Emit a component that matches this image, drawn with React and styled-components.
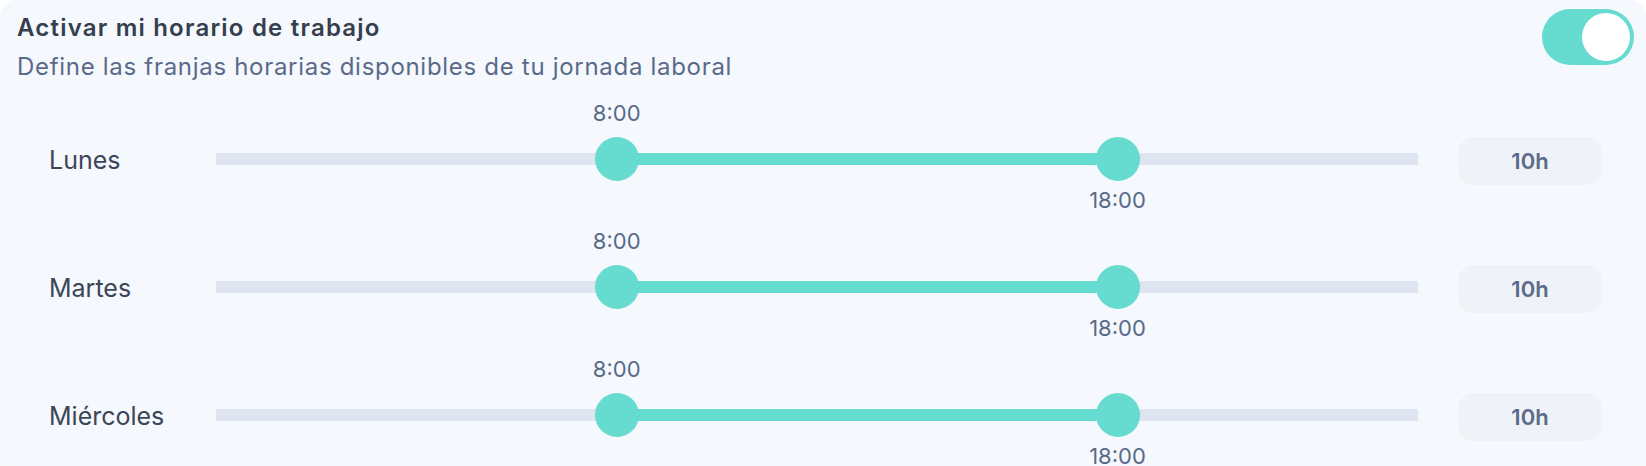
import { useState } from "react";
import styled, { createGlobalStyle } from "styled-components";

const GlobalStyle = createGlobalStyle`
    body {
        margin: 0;
        background: #ffffff;
        font-family: Inter, "Noto Sans", sans-serif;
    }
`;

const DAYS = [
    { name: "Lunes", start: 8, end: 18 },
    { name: "Martes", start: 8, end: 18 },
    { name: "Miércoles", start: 8, end: 18 },
];

const pct = (h) => `${(h / 24) * 100}%`;

function DayRow({ name, start, end }) {
    return (
        <Row>
            <DayName>{name}</DayName>
            <TrackArea>
                <Track />
                <Fill style={{ left: pct(start), width: pct(end - start) }} />
                <Thumb style={{ left: pct(start) }} />
                <Thumb style={{ left: pct(end) }} />
                <TimeLabel $pos="top" style={{ left: pct(start) }}>
                    {start}:00
                </TimeLabel>
                <TimeLabel $pos="bottom" style={{ left: pct(end) }}>
                    {end}:00
                </TimeLabel>
            </TrackArea>
            <Hours>{end - start}h</Hours>
        </Row>
    );
}

function App() {
    const [active, setActive] = useState(true);

    return (
        <>
            <GlobalStyle />
            <Card>
                <Header>
                    <div>
                        <Title>Activar mi horario de trabajo</Title>
                        <Subtitle>
                            Define las franjas horarias disponibles de tu jornada laboral
                        </Subtitle>
                    </div>
                    <Toggle
                        type="button"
                        $on={active}
                        onClick={() => setActive(!active)}
                        aria-label="Activar horario"
                    >
                        <Knob />
                    </Toggle>
                </Header>

                <Schedule>
                    {DAYS.map((d) => (
                        <DayRow key={d.name} {...d} />
                    ))}
                </Schedule>
            </Card>
        </>
    );
}

const Card = styled.div`
    background: #f5f8fc;
    border-radius: 16px;
    min-height: 466px;
`;

const Header = styled.div`
    display: flex;
    justify-content: space-between;
    align-items: flex-start;
    padding: 9px 12px 0 17px;
`;

const Title = styled.div`
    margin-top: 5px;
    font-size: 24px;
    line-height: 28px;
    font-weight: 600;
    letter-spacing: 1.2px;
    color: #343e4e;
`;

const Subtitle = styled.div`
    margin-top: 9px;
    font-size: 24px;
    line-height: 32px;
    letter-spacing: 0.7px;
    color: #5a6a8a;
`;

const Toggle = styled.button`
    width: 92px;
    height: 56px;
    padding: 4px;
    border: none;
    border-radius: 28px;
    background: ${(p) => (p.$on ? "#66dbcf" : "#d6dce7")};
    display: flex;
    justify-content: ${(p) => (p.$on ? "flex-end" : "flex-start")};
    cursor: pointer;
`;

const Knob = styled.span`
    width: 48px;
    height: 48px;
    border-radius: 50%;
    background: #ffffff;
`;

const Schedule = styled.div`
    padding: 12px 44px 0 49px;
`;

const Row = styled.div`
    display: grid;
    grid-template-columns: 127px 1fr 144px;
    column-gap: 40px;
    align-items: center;
    height: 128px;
`;

const DayName = styled.div`
    font-size: 25px;
    line-height: 32px;
    color: #3b4658;
    padding-top: 2px;
`;

const TrackArea = styled.div`
    position: relative;
    height: 100%;
    display: flex;
    align-items: center;
`;

const Track = styled.div`
    width: 100%;
    height: 12px;
    background: #dfe5f0;
`;

const Fill = styled.div`
    position: absolute;
    top: 58px;
    height: 12px;
    background: #66dbcf;
`;

const Thumb = styled.div`
    position: absolute;
    top: 42px;
    width: 44px;
    height: 44px;
    margin-left: -22px;
    border-radius: 50%;
    background: #66dbcf;
`;

const TimeLabel = styled.div`
    position: absolute;
    top: ${(p) => (p.$pos === "top" ? "5px" : "92px")};
    transform: translateX(-50%);
    font-size: 22px;
    line-height: 26px;
    color: #5a6a8a;
    white-space: nowrap;
`;

const Hours = styled.div`
    height: 48px;
    margin-top: 4px;
    border-radius: 16px;
    background: #eff2f7;
    display: flex;
    align-items: center;
    justify-content: center;
    font-size: 22px;
    font-weight: 600;
    color: #5a6a8a;
`;

export default App;
